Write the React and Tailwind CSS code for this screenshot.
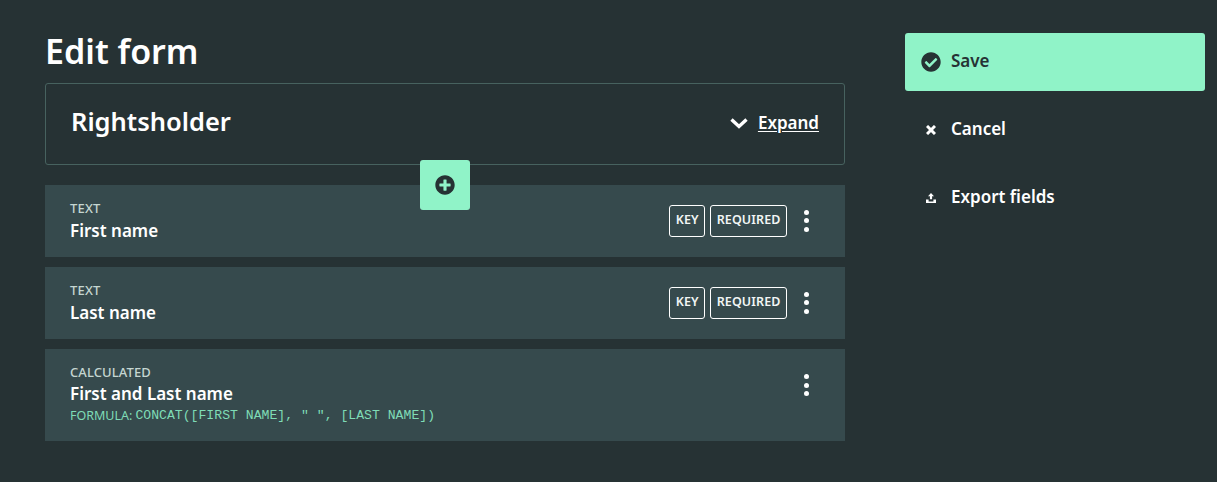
import React from 'react';
import { FaCheckCircle, FaPlusCircle } from 'react-icons/fa';

const sans = "font-['Noto_Sans',sans-serif]";

function Dots() {
  return (
    <div className="flex flex-col gap-[3.5px] w-[5px] ml-[12px]">
      <span className="w-[5px] h-[5px] rounded-full bg-white"></span>
      <span className="w-[5px] h-[5px] rounded-full bg-white"></span>
      <span className="w-[5px] h-[5px] rounded-full bg-white"></span>
    </div>
  );
}

function Tag({ children }) {
  return (
    <span className="h-[32px] px-[5.5px] flex items-center border border-white rounded-[3px] text-[12.5px] font-semibold text-[#f2f6f5] tracking-[0.1px]">
      {children}
    </span>
  );
}

function FieldRow({ type, name, tags }) {
  return (
    <div className="h-[72px] bg-[#364a4d] pl-[25px] pr-[36px] flex items-center justify-between">
      <div className="flex flex-col gap-[2px]">
        <span className="text-[13px] leading-[16px] font-medium text-[#c5d6d1] tracking-[0.2px]">{type}</span>
        <span className="text-[17px] leading-[25px] font-semibold text-white">{name}</span>
      </div>
      <div className="flex items-center gap-[5px] -mt-[1px]">
        {tags && <Tag>KEY</Tag>}
        {tags && <Tag>REQUIRED</Tag>}
        <Dots />
      </div>
    </div>
  );
}

function SideLink({ icon, children }) {
  return (
    <div className="h-[58px] mt-[10px] flex items-center pl-[20px] pb-[2px] text-[17px] font-semibold text-white">
      <span className="w-[26px] flex justify-start">{icon}</span>
      {children}
    </div>
  );
}

export default function App() {
  return (
    <div className={`w-[1217px] h-[482px] bg-[#263234] flex overflow-hidden ${sans}`}>
      <div className="w-[800px] ml-[45px] relative">
        <h1 className="mt-[30px] h-[43px] text-[34px] leading-[43px] font-semibold text-white">Edit form</h1>
        <div className="mt-[10px] h-[82px] border border-[#47625f] rounded-[3px] pl-[25px] pr-[25px] pb-[6px] flex items-center justify-between">
          <span className="text-[25.5px] font-semibold text-white">Rightsholder</span>
          <div className="flex items-center gap-[10px] mt-[4px]">
            <svg viewBox="0 0 18 12" className="w-[18px] h-[12px]" fill="none" stroke="white" strokeWidth="3.4">
              <path d="M1.5 2.5 9 9.5 16.5 2.5" />
            </svg>
            <span className="text-[17px] font-semibold text-white underline underline-offset-2">Expand</span>
          </div>
        </div>
        <div className="absolute left-[375px] top-[160px] w-[50px] h-[50px] bg-[#90f3c8] rounded-[3px] flex items-center justify-center">
          <FaPlusCircle className="w-[20px] h-[20px] text-[#263234]" />
        </div>
        <div className="mt-[20px] flex flex-col gap-[10px]">
          <FieldRow type="TEXT" name="First name" tags />
          <FieldRow type="TEXT" name="Last name" tags />
          <div className="h-[92px] bg-[#364a4d] pl-[25px] pr-[36px] flex items-center justify-between">
            <div className="flex flex-col gap-[1px] pb-[2px]">
              <span className="text-[13px] leading-[16px] font-medium text-[#c5d6d1] tracking-[0.1px]">CALCULATED</span>
              <span className="text-[17px] leading-[25px] font-semibold text-white">First and Last name</span>
              <span className="text-[12.5px] leading-[17px] text-[#7fdcb6] flex items-center">
                FORMULA:
                <span className="font-['Liberation_Mono',monospace] text-[13.15px] ml-[3px]">CONCAT([FIRST NAME], " ", [LAST NAME])</span>
              </span>
            </div>
            <div className="self-start mt-[25px]">
              <Dots />
            </div>
          </div>
        </div>
      </div>
      <div className="w-[300px] ml-[60px] pt-[33px]">
        <div className="h-[58px] bg-[#90f3c8] rounded-[3px] flex items-center pl-[16px] pb-[2px] text-[17px] font-semibold text-[#263234]">
          <FaCheckCircle className="w-[20px] h-[20px] mr-[10px] mt-[2px]" />
          Save
        </div>
        <SideLink
          icon={
            <svg viewBox="0 0 10 10" className="w-[10px] h-[10px] ml-[1px] mt-[2px]" fill="none" stroke="white" strokeWidth="3">
              <path d="M1 1 9 9M9 1 1 9" />
            </svg>
          }
        >
          Cancel
        </SideLink>
        <SideLink
          icon={
            <svg viewBox="0 0 12 12" className="w-[12px] h-[12px] mt-[2px]" fill="currentColor">
              <path d="M6 1 9 4.2H7.1V7.2H4.9V4.2H3Z" />
              <path d="M1 7.4h2.6v2h4.8v-2H11V11H1Z" />
            </svg>
          }
        >
          Export fields
        </SideLink>
      </div>
    </div>
  );
}
